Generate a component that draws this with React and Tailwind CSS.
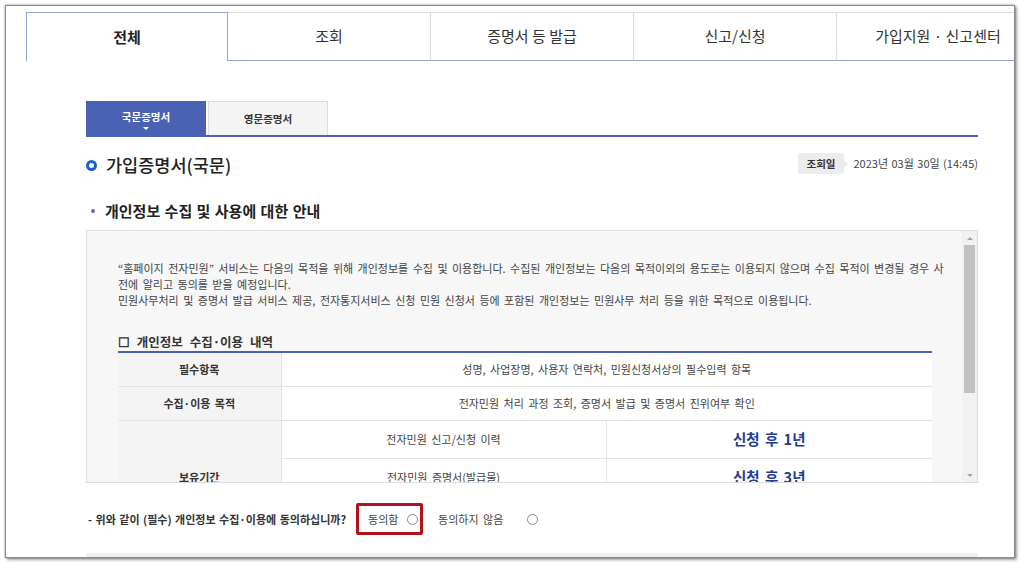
import React from "react";

const tabs = ["전체", "조회", "증명서 등 발급", "신고/신청", "가입지원 · 신고센터"];

const Radio = () => (
  <span className="inline-block w-[11px] h-[11px] rounded-full border border-[#8c8c8c] bg-white" />
);

export default function App() {
  return (
    <div className="w-[1024px] h-[564px] bg-white overflow-hidden font-['Noto_Sans_CJK_KR','Noto_Sans',sans-serif] text-[#333]">
      {/* 창 프레임 */}
      <div className="ml-[5px] mt-[5px] w-[1010px] h-[553px] border border-[#8a8a8a] bg-white overflow-hidden shadow-[0_0_2px_rgba(0,0,0,0.45),2px_2px_3px_rgba(0,0,0,0.35)]">
        {/* 상단 탭 */}
        <div className="pt-[6px] pl-[20px] flex">
          {tabs.map((t, i) =>
            i === 0 ? (
              <div
                key={t}
                className="shrink-0 w-[202px] h-[49px] flex items-center justify-center border-t border-l border-r border-[#8ea6da] text-[15px] font-bold text-[#222]"
              >
                {t}
              </div>
            ) : (
              <div
                key={t}
                className="shrink-0 w-[203px] h-[49px] flex items-center justify-center border-t border-r border-t-[#dcdcdc] border-r-[#dcdcdc] border-b border-b-[#8ea6da] text-[15px] text-[#333]"
              >
                {t}
              </div>
            )
          )}
        </div>

        <div className="ml-[80px] w-[892px]">
          {/* 국문/영문 탭 */}
          <div className="mt-[40px] flex gap-[2px] border-b-2 border-[#4b62b4]">
            <div className="w-[120px] h-[34px] bg-[#4b62b4] flex flex-col items-center justify-center text-white text-[10.5px] font-bold">
              <span className="leading-[14px] mt-[3px]">국문증명서</span>
              <span className="w-0 h-0 border-l-[3px] border-r-[3px] border-t-[3px] border-l-transparent border-r-transparent border-t-white mt-[3px]" />
            </div>
            <div className="w-[120px] h-[34px] bg-[#f4f4f4] border-t border-l border-r border-[#dcdcdc] flex items-center justify-center text-[10.5px] font-bold text-[#333]">
              영문증명서
            </div>
          </div>

          {/* 제목 */}
          <div className="mt-[16px] h-[21px] flex items-center justify-between">
            <div className="flex items-center">
              <span className="w-[11px] h-[11px] rounded-full border-[3px] border-[#1565c0] mt-[3px]" />
              <span className="ml-[9px] text-[17.5px] font-medium text-[#222] leading-none mt-[2px]">가입증명서(국문)</span>
            </div>
            <div className="flex items-center">
              <div className="relative h-[21px] px-[9px] bg-[#ececec] flex items-center text-[10.5px] font-bold text-[#333] rounded-[2px]">
                조회일
                <span className="absolute right-[-4px] top-[7px] w-0 h-0 border-t-[4px] border-b-[4px] border-l-[4px] border-t-transparent border-b-transparent border-l-[#ececec]" />
              </div>
              <span className="ml-[9px] text-[11px] text-[#444] [word-spacing:1px]">2023년 03월 30일 (14:45)</span>
            </div>
          </div>

          {/* 소제목 */}
          <div className="mt-[27px] h-[20px] flex items-center">
            <span className="ml-[5px] w-[4px] h-[4px] rounded-full bg-[#5b6fae]" />
            <span className="ml-[10px] text-[15px] font-bold text-[#222] [word-spacing:1px]">개인정보 수집 및 사용에 대한 안내</span>
          </div>

          {/* 안내 박스 */}
          <div className="mt-[9px] h-[253px] border border-[#dedede] bg-[#f7f7f7] flex overflow-hidden">
            <div className="flex-1 pl-[31px] pt-[29px] overflow-hidden">
              <p className="text-[11px] leading-[16px] text-[#444] whitespace-nowrap [word-spacing:2px]">
                “홈페이지 전자민원” 서비스는 다음의 목적을 위해 개인정보를 수집 및 이용합니다. 수집된 개인정보는 다음의 목적이외의 용도로는 이용되지 않으며 수집 목적이 변경될 경우 사
                <br />
                전에 알리고 동의를 받을 예정입니다.
                <br />
                민원사무처리 및 증명서 발급 서비스 제공, 전자통지서비스 신청 민원 신청서 등에 포함된 개인정보는 민원사무 처리 등을 위한 목적으로 이용됩니다.
              </p>

              <div className="mt-[25px] w-[814px] border-b-2 border-[#4b62b4] pb-[1px] text-[12.5px] leading-[17px] font-bold text-[#333] [word-spacing:4px]">
                ☐ 개인정보 수집·이용 내역
              </div>

              <table className="w-[814px] border-collapse text-[11px] text-[#444] [word-spacing:2px]">
                <colgroup>
                  <col className="w-[163px]" />
                  <col className="w-[325px]" />
                  <col className="w-[326px]" />
                </colgroup>
                <tbody>
                  <tr className="h-[33px]">
                    <th className="bg-[#f4f4f4] border-b border-[#e3e3e3] font-bold text-[#333]">필수항목</th>
                    <td colSpan={2} className="bg-white border-b border-l border-[#e3e3e3] text-center">
                      성명, 사업장명, 사용자 연락처, 민원신청서상의 필수입력 항목
                    </td>
                  </tr>
                  <tr className="h-[34px]">
                    <th className="bg-[#f4f4f4] border-b border-[#e3e3e3] font-bold text-[#333]">수집·이용 목적</th>
                    <td colSpan={2} className="bg-white border-b border-l border-[#e3e3e3] text-center">
                      전자민원 처리 과정 조회, 증명서 발급 및 증명서 진위여부 확인
                    </td>
                  </tr>
                  <tr className="h-[38px]">
                    <th rowSpan={3} className="bg-[#f4f4f4] border-b border-[#e3e3e3] font-bold text-[#333]">보유기간</th>
                    <td className="bg-white border-b border-l border-[#e3e3e3] text-center">전자민원 신고/신청 이력</td>
                    <td className="bg-white border-b border-l border-[#e3e3e3] text-center text-[14.5px] font-bold text-[#1f3d8f]">신청 후 1년</td>
                  </tr>
                  <tr className="h-[38px]">
                    <td className="bg-white border-b border-l border-[#e3e3e3] text-center">전자민원 증명서(발급물)</td>
                    <td className="bg-white border-b border-l border-[#e3e3e3] text-center text-[14.5px] font-bold text-[#1f3d8f]">신청 후 3년</td>
                  </tr>
                  <tr className="h-[38px]">
                    <td className="bg-white border-b border-l border-[#e3e3e3] text-center">전자민원 진위확인 이력</td>
                    <td className="bg-white border-b border-l border-[#e3e3e3] text-center text-[14.5px] font-bold text-[#1f3d8f]">신청 후 1년</td>
                  </tr>
                </tbody>
              </table>
            </div>

            {/* 스크롤바 */}
            <div className="w-[15px] bg-[#f1f1f1] flex flex-col items-center">
              <div className="h-[14px] flex items-center justify-center">
                <span className="w-0 h-0 border-l-[3px] border-r-[3px] border-b-[3px] border-l-transparent border-r-transparent border-b-[#a3a3a3]" />
              </div>
              <div className="w-[11px] h-[148px] bg-[#c1c1c1]" />
              <div className="flex-1" />
              <div className="h-[14px] flex items-center justify-center">
                <span className="w-0 h-0 border-l-[3px] border-r-[3px] border-t-[3px] border-l-transparent border-r-transparent border-t-[#a3a3a3]" />
              </div>
            </div>
          </div>

          {/* 동의 여부 */}
          <div className="mt-[20px] h-[32px] flex items-center">
            <span className="ml-[2px] mr-[10px] shrink-0 text-[11px] font-bold text-[#333] whitespace-nowrap [word-spacing:1px]">
              - 위와 같이 (필수) 개인정보 수집·이용에 동의하십니까?
            </span>
            <div className="shrink-0 w-[67px] h-[32px] border-[3px] border-[#b3121c] rounded-[2px] flex items-center pl-[9px]">
              <span className="text-[11px] text-[#444]">동의함</span>
              <span className="ml-[9px] flex"><Radio /></span>
            </div>
            <span className="ml-[15px] text-[11px] text-[#444] [word-spacing:2px]">동의하지 않음</span>
            <span className="ml-[24px] flex"><Radio /></span>
          </div>

          <div className="mt-[18px] h-[20px] bg-[#efefef]" />
        </div>
      </div>
    </div>
  );
}
